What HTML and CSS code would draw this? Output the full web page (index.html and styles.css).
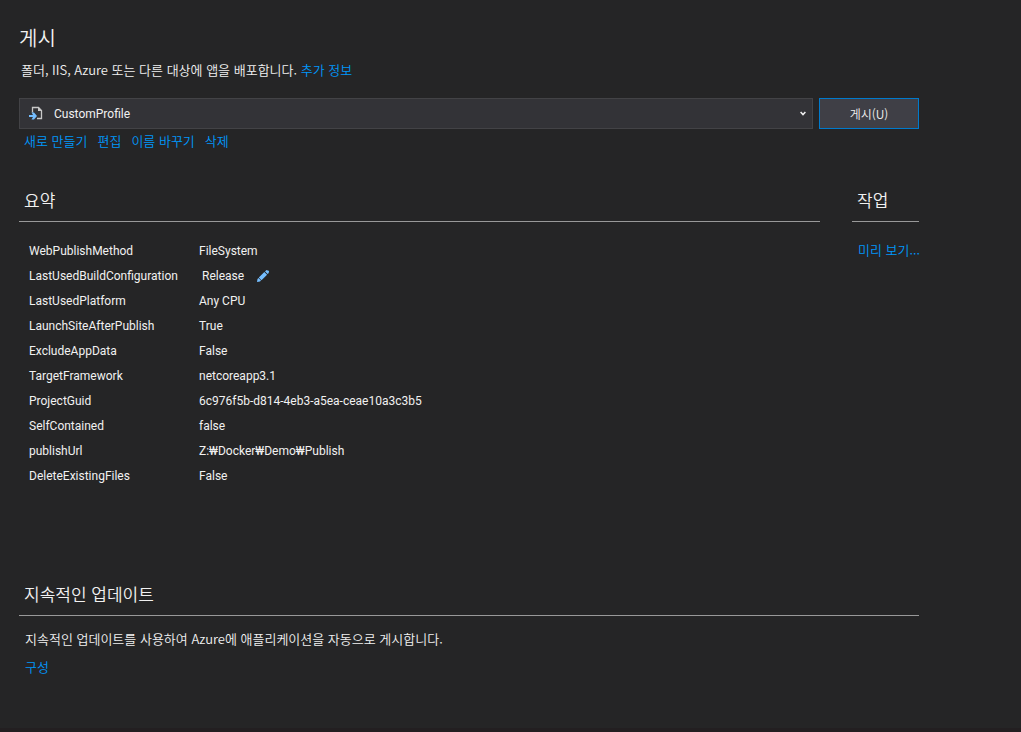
FILE: index.html
```html
<!DOCTYPE html>
<html lang="ko">
<head>
<meta charset="utf-8">
<meta name="viewport" content="width=device-width, initial-scale=1">
<title>게시</title>
<link rel="stylesheet" href="styles.css">
</head>
<body>
<main class="page">
  <header class="intro">
    <h1 class="title">게시</h1>
    <p class="lead">폴더, IIS, Azure 또는 다른 대상에 앱을 배포합니다. <a class="link" href="#info">추가 정보</a></p>
  </header>

  <div class="profile-bar">
    <div class="picker">
      <svg class="picker-icon" viewBox="0 0 16 16" aria-hidden="true">
        <path d="M4.500 7.500V2.500H10.500L13.500 5.500V13.500H9" fill="none" stroke="#c8c8c8" stroke-width="1.300"/>
        <path d="M10 2V6H14Z" fill="#c8c8c8"/>
        <path d="M1 10H5L3.500 7.500H6L9 11L6 14.500H3.500L5 12H1Z" fill="#75beff"/>
      </svg>
      <select class="picker-select" aria-label="게시 프로필">
        <option>CustomProfile</option>
      </select>
      <svg class="picker-arrow" viewBox="0 0 6 5" aria-hidden="true"><path d="M.6 1L3 3.600L5.400 1" fill="none" stroke="#f1f1f1" stroke-width="1.500"/></svg>
    </div>
    <button class="publish" type="button">게시(U)</button>
  </div>
  <nav class="profile-links" aria-label="프로필 작업">
    <a class="link" href="#new">새로 만들기</a>
    <a class="link" href="#edit">편집</a>
    <a class="link" href="#rename">이름 바꾸기</a>
    <a class="link" href="#delete">삭제</a>
  </nav>

  <div class="columns">
    <section class="summary">
      <h2 class="heading">요약</h2>
      <table class="settings">
        <tbody>
          <tr><th scope="row">WebPublishMethod</th><td>FileSystem</td></tr>
          <tr><th scope="row">LastUsedBuildConfiguration</th><td><span class="editable">Release
            <button class="edit" type="button" aria-label="구성 편집"><svg class="edit-icon" viewBox="0 0 14 14" aria-hidden="true"><path d="M1 13L1.500 10L2.500 9L5 11.500L4 12.500ZM2.800 8.500L8.300 3L11.100 5.800L5.500 11.200ZM9 2.400L10.500 1L11.300 1.600L12 1.300L13.200 2.500L12.600 3.200L13 3.800L11.700 5.100Z" fill="#75beff"/></svg></button></span></td></tr>
          <tr><th scope="row">LastUsedPlatform</th><td>Any CPU</td></tr>
          <tr><th scope="row">LaunchSiteAfterPublish</th><td>True</td></tr>
          <tr><th scope="row">ExcludeAppData</th><td>False</td></tr>
          <tr><th scope="row">TargetFramework</th><td>netcoreapp3.1</td></tr>
          <tr><th scope="row">ProjectGuid</th><td>6c976f5b-d814-4eb3-a5ea-ceae10a3c3b5</td></tr>
          <tr><th scope="row">SelfContained</th><td>false</td></tr>
          <tr><th scope="row">publishUrl</th><td>Z:₩Docker₩Demo₩Publish</td></tr>
          <tr><th scope="row">DeleteExistingFiles</th><td>False</td></tr>
        </tbody>
      </table>
    </section>
    <section class="actions">
      <h2 class="heading">작업</h2>
      <a class="link preview" href="#preview">미리 보기...</a>
    </section>
  </div>

  <section class="continuous">
    <h2 class="heading">지속적인 업데이트</h2>
    <p class="note">지속적인 업데이트를 사용하여 Azure에 애플리케이션을 자동으로 게시합니다.</p>
    <a class="link configure" href="#configure">구성</a>
  </section>
</main>
</body>
</html>
```
FILE: styles.css
```css
* {
  box-sizing: border-box;
}

body {
  margin: 0;
  min-height: 100vh;
  background: #252526;
  border-bottom: 4px solid #231f21;
  color: #f1f1f1;
  font: 350 13px/20px "Noto Sans CJK KR", sans-serif;
}

h1, h2, p {
  margin: 0;
  font-weight: 350;
}

.page {
  padding: 24px 102px 0 19px;
}

.link {
  color: #0097fb;
  text-decoration: none;
}

.title {
  font-size: 20px;
  line-height: 28px;
}

.lead {
  margin-top: 8px;
  padding-left: 2px;
}

.profile-bar {
  display: flex;
  gap: 6px;
  margin-top: 18px;
}

.picker {
  position: relative;
  flex: 1;
  height: 31px;
}

.picker-select {
  appearance: none;
  width: 100%;
  height: 100%;
  padding: 0 24px 0 34px;
  border: 1px solid #434346;
  border-radius: 0;
  background: #333337;
  color: #f1f1f1;
  font: 12px/20px Roboto, "Noto Sans CJK KR", sans-serif;
}

.picker-icon {
  position: absolute;
  top: 7px;
  left: 9px;
  width: 16px;
  height: 16px;
  pointer-events: none;
}

.picker-arrow {
  position: absolute;
  top: 13px;
  right: 7px;
  width: 6px;
  height: 5px;
  pointer-events: none;
}

.publish {
  width: 100px;
  padding: 0;
  border: 1px solid #007acc;
  background: #3f3f46;
  color: #f1f1f1;
  font: 350 12px/20px "Noto Sans CJK KR", sans-serif;
}

.profile-links {
  display: flex;
  gap: 10px;
  margin-top: 2px;
  padding-left: 5px;
}

.columns {
  display: flex;
  gap: 32px;
  margin-top: 37px;
}

.summary {
  flex: 1;
}

.actions {
  width: 67px;
  white-space: nowrap;
}

.heading {
  padding: 0 0 9px 5px;
  border-bottom: 1px solid #999;
  font-size: 17px;
  line-height: 24px;
}

.settings {
  margin: 16px 0 0 10px;
  border-collapse: collapse;
  font-family: Roboto, "Noto Sans CJK KR", sans-serif;
  font-size: 12px;
}

.settings th,
.settings td {
  height: 25px;
  padding: 0;
  font-weight: 400;
  text-align: left;
}

.settings th {
  width: 170px;
}

.editable {
  display: flex;
  align-items: center;
  gap: 12px;
  padding-left: 3px;
}

.edit {
  display: flex;
  padding: 0;
  border: 0;
  background: none;
}

.edit-icon {
  width: 14px;
  height: 14px;
}

.preview {
  display: block;
  margin-top: 18px;
  padding-left: 6px;
}

.continuous {
  margin-top: 94px;
}

.note {
  margin-top: 13px;
  padding-left: 6px;
}

.configure {
  display: inline-block;
  margin-top: 8px;
  padding-left: 6px;
}
```
